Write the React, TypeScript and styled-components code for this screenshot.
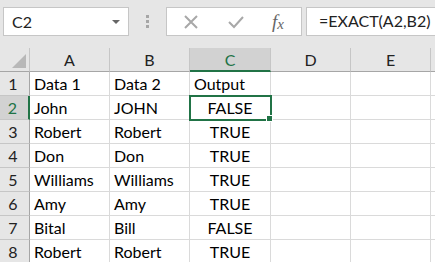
import React from "react";
import styled, { createGlobalStyle } from "styled-components";

const rows = [
  ["Data 1", "Data 2", "Output"],
  ["John", "JOHN", "FALSE"],
  ["Robert", "Robert", "TRUE"],
  ["Don", "Don", "TRUE"],
  ["Williams", "Williams", "TRUE"],
  ["Amy", "Amy", "TRUE"],
  ["Bital", "Bill", "FALSE"],
  ["Robert", "Robert", "TRUE"],
];

const cols = ["A", "B", "C", "D", "E", ""];

function App() {
  return (
    <>
      <GlobalStyle />
      <Wrap>
        <FormulaBar>
          <NameBox>
            <span>C2</span>
            <Caret />
          </NameBox>
          <Dots>
            <i />
            <i />
            <i />
          </Dots>
          <ActionBox>
            <svg width="16" height="16" viewBox="0 0 16 16">
              <path d="M2 2 L14 14 M14 2 L2 14" stroke="#a8a8a8" strokeWidth="2" />
            </svg>
            <svg width="16" height="14" viewBox="0 0 16 14">
              <path d="M1 7 L6 12 L15 2" stroke="#a8a8a8" strokeWidth="2" fill="none" />
            </svg>
            <Fx>
              f<sub>x</sub>
            </Fx>
          </ActionBox>
          <FormulaInput>=EXACT(A2,B2)</FormulaInput>
        </FormulaBar>
        <Sheet>
          <Corner>
            <svg width="14" height="14" viewBox="0 0 14 14">
              <path d="M14 0 L14 14 L0 14 Z" fill="#b8b8b8" />
            </svg>
          </Corner>
          {cols.map((c, i) => (
            <ColHead key={i} active={c === "C"}>
              {c}
            </ColHead>
          ))}
          {rows.map((r, ri) => (
            <React.Fragment key={ri}>
              <RowHead active={ri === 1}>{ri + 1}</RowHead>
              <Cell>{r[0]}</Cell>
              <Cell>{r[1]}</Cell>
              <Cell center={ri > 0} selected={ri === 1}>
                {r[2]}
                {ri === 1 && <Handle />}
              </Cell>
              <Cell />
              <Cell />
              <Cell />
            </React.Fragment>
          ))}
        </Sheet>
      </Wrap>
    </>
  );
}

const GlobalStyle = createGlobalStyle`
  body {
    margin: 0;
    background: #ffffff;
    font-family: Lato, "Open Sans", sans-serif;
    overflow: hidden;
  }
`;

const Wrap = styled.div`
  width: 435px;
  height: 262px;
  overflow: hidden;
`;

const FormulaBar = styled.div`
  display: flex;
  align-items: center;
  height: 48px;
  padding: 7px 0 12px 3px;
  box-sizing: border-box;
  background: #e6e6e6;
`;

const NameBox = styled.div`
  display: flex;
  align-items: center;
  justify-content: space-between;
  width: 126px;
  height: 29px;
  box-sizing: border-box;
  padding: 0 8px 0 8px;
  background: #fff;
  border: 1px solid #c6c6c6;
  font-size: 16px;
  color: #222;
`;

const Caret = styled.div`
  width: 0;
  height: 0;
  border-left: 4px solid transparent;
  border-right: 4px solid transparent;
  border-top: 4px solid #666;
`;

const Dots = styled.div`
  display: flex;
  flex-direction: column;
  gap: 2px;
  margin: 0 17px 0 17px;
  i {
    display: block;
    width: 3px;
    height: 3px;
    background: #a6a6a6;
  }
`;

const ActionBox = styled.div`
  display: flex;
  align-items: center;
  justify-content: space-between;
  width: 136px;
  height: 29px;
  box-sizing: border-box;
  padding: 0 17px 0 16px;
  background: #fff;
  border: 1px solid #c6c6c6;
`;

const Fx = styled.span`
  font-family: "Liberation Serif", serif;
  font-style: italic;
  font-size: 19px;
  color: #666;
  sub {
    font-size: 15px;
    vertical-align: -1px;
  }
`;

const FormulaInput = styled.div`
  flex: 1;
  height: 29px;
  margin-left: 4px;
  box-sizing: border-box;
  padding: 3px 0 0 12px;
  background: #fff;
  border: 1px solid #c6c6c6;
  border-right: none;
  font-size: 16px;
  color: #222;
  white-space: nowrap;
`;

const Sheet = styled.div`
  display: grid;
  grid-template-columns: 30px 80px 80px 81px 80px 80px 1fr;
  grid-auto-rows: 24px;
  font-size: 16px;
`;

const Corner = styled.div`
  display: flex;
  align-items: flex-end;
  justify-content: flex-end;
  padding: 0 3px 3px 0;
  background: #e6e6e6;
  border-right: 1px solid #c6c6c6;
  border-bottom: 1px solid #a6a6a6;
`;

const ColHead = styled.div<{ active?: boolean }>`
  display: flex;
  align-items: center;
  justify-content: center;
  box-sizing: border-box;
  background: ${(p) => (p.active ? "#d2d2d2" : "#e6e6e6")};
  color: ${(p) => (p.active ? "#217346" : "#222")};
  border-right: 1px solid #c6c6c6;
  border-bottom: ${(p) => (p.active ? "2px solid #217346" : "1px solid #a6a6a6")};
`;

const RowHead = styled.div<{ active?: boolean }>`
  display: flex;
  align-items: center;
  justify-content: center;
  padding-right: 3px;
  box-sizing: border-box;
  background: ${(p) => (p.active ? "#d2d2d2" : "#e6e6e6")};
  color: ${(p) => (p.active ? "#217346" : "#222")};
  border-bottom: 1px solid #c6c6c6;
  border-right: ${(p) => (p.active ? "2px solid #217346" : "1px solid #a6a6a6")};
`;

const Cell = styled.div<{ center?: boolean; selected?: boolean }>`
  position: relative;
  display: flex;
  align-items: center;
  justify-content: ${(p) => (p.center ? "center" : "flex-start")};
  box-sizing: border-box;
  padding-left: ${(p) => (p.center ? "0" : "4px")};
  border-right: 1px solid #dadada;
  border-bottom: 1px solid #dadada;
  color: #000;
  white-space: nowrap;
  ${(p) =>
    p.selected &&
    `
    outline: 2px solid #217346;
    outline-offset: -1px;
    z-index: 1;
  `}
`;

const Handle = styled.div`
  position: absolute;
  right: -3px;
  bottom: -3px;
  width: 5px;
  height: 5px;
  background: #217346;
  border: 1px solid #fff;
`;

export default App;
